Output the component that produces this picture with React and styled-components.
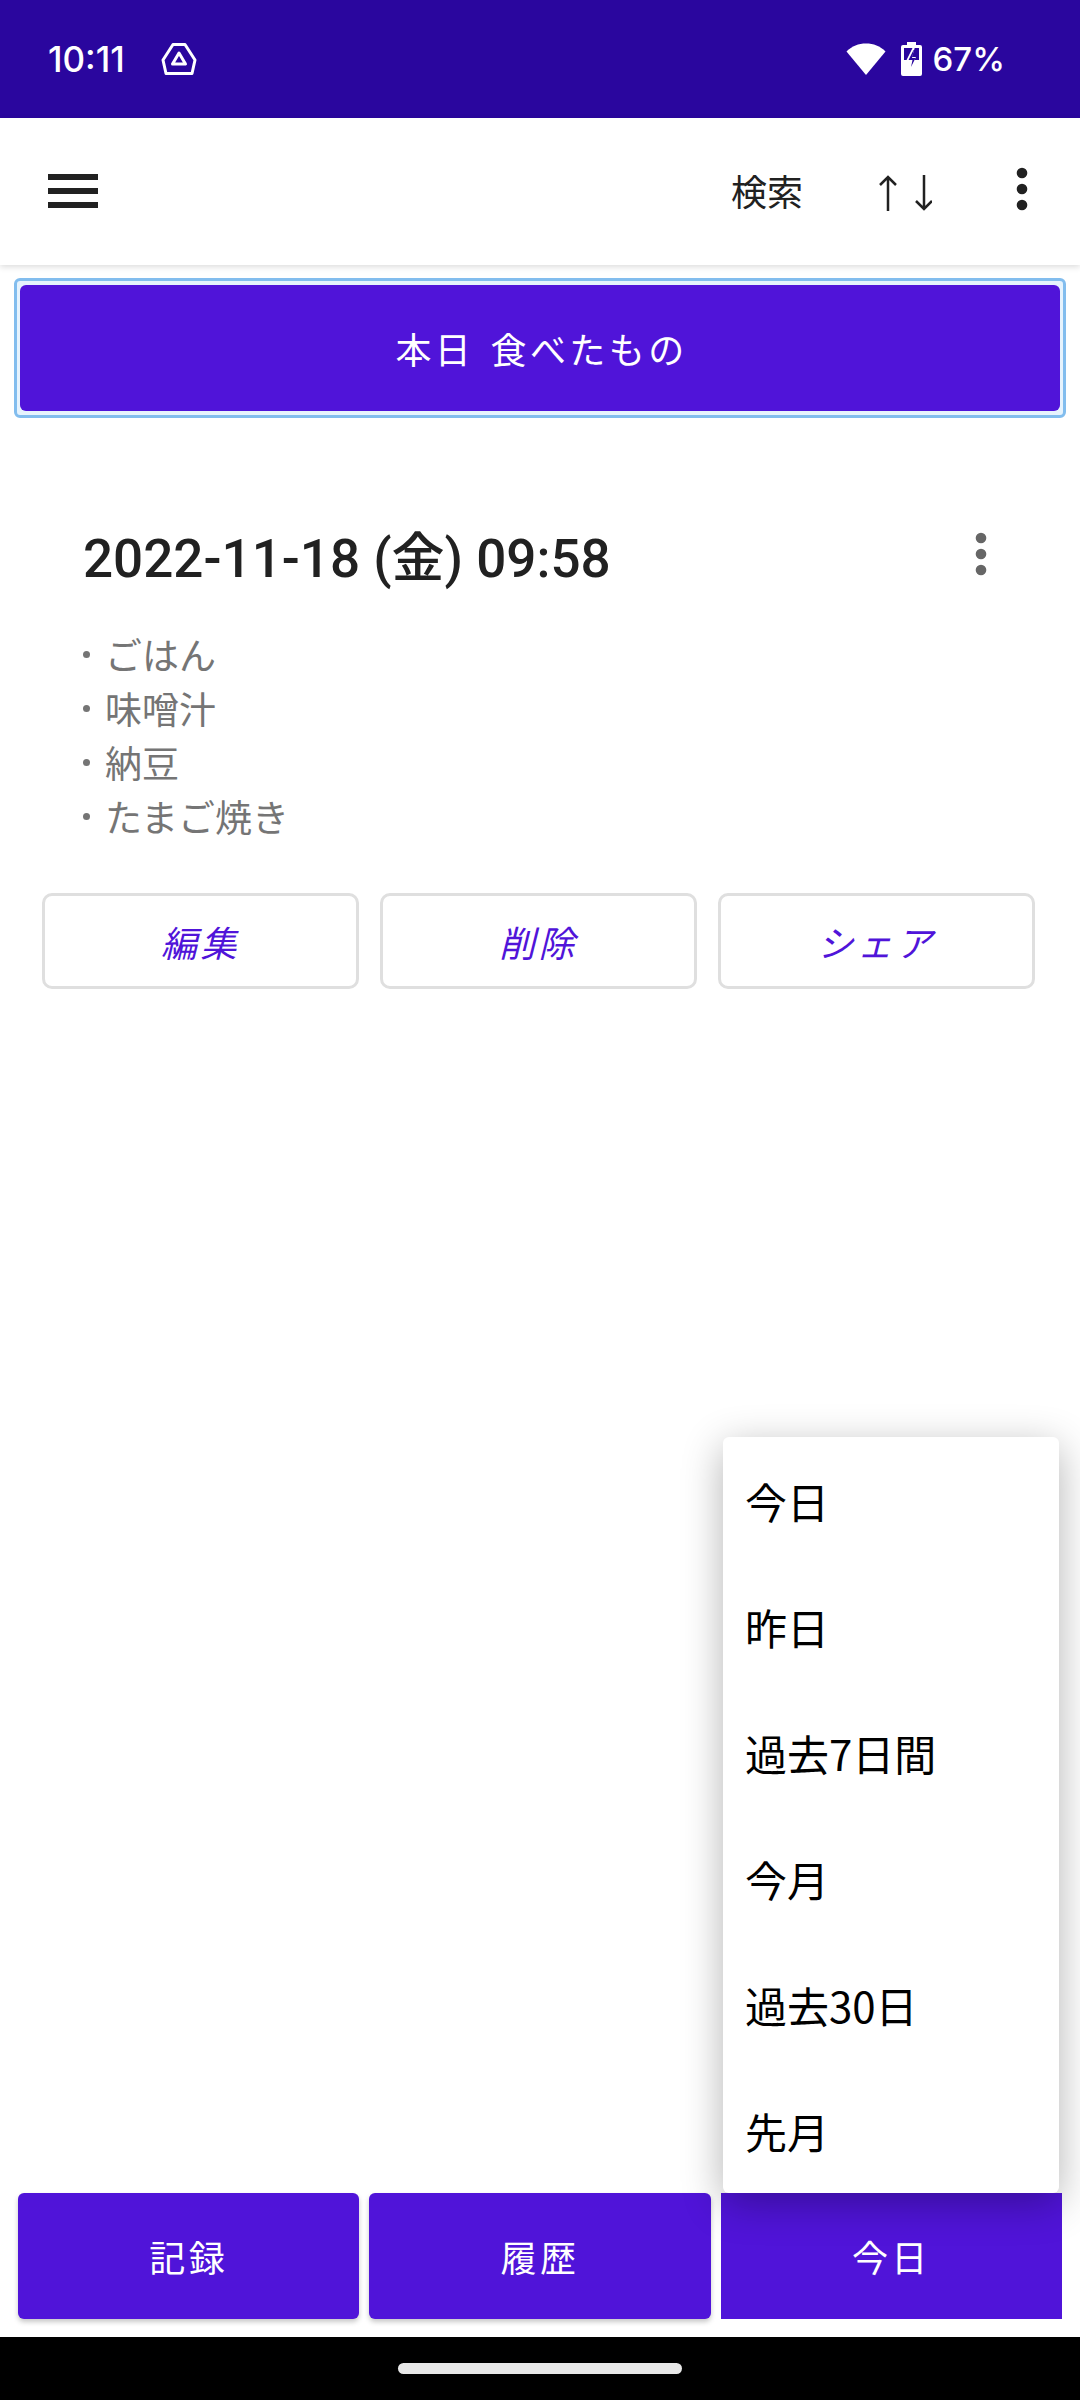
import React from "react";
import styled, { createGlobalStyle } from "styled-components";

const CJK = `Roboto, "Noto Sans CJK JP", sans-serif`;

const Global = createGlobalStyle`
  html, body { margin: 0; padding: 0; background: #fff; }
  * { box-sizing: border-box; }
  body { font-family: ${CJK}; }
`;

const Page = styled.div`
  position: relative;
  width: 1080px;
  height: 2400px;
  display: flex;
  flex-direction: column;
  overflow: hidden;
  background: #fff;
`;

const StatusBar = styled.div`
  height: 118px;
  flex: none;
  background: #2a069e;
  color: #fff;
  display: flex;
  align-items: center;
  padding: 0 75px 0 48px;
  font-family: Inter, sans-serif;
  font-size: 35px;
  font-weight: 500;
`;

const StatusTime = styled.span`
  line-height: 118px;
  margin-right: 36px;
`;

const StatusRight = styled.div`
  margin-left: auto;
  display: flex;
  align-items: center;
  font-size: 33px;
`;

const StatusIcon = styled.svg`
  display: block;
  flex: none;
  margin-right: ${(p) => p.$mr || 0}px;
`;

const Toolbar = styled.header`
  position: relative;
  z-index: 2;
  flex: none;
  height: 147px;
  background: #fff;
  box-shadow: 0 2px 6px rgba(0, 0, 0, 0.14);
  display: flex;
  align-items: center;
  padding: 0 0 0 48px;
  color: #212121;
`;

const SearchLabel = styled.span`
  margin-left: auto;
  font-size: 36px;
  line-height: 1;
  margin-top: 4px;
`;

const ToolbarIcon = styled.svg`
  display: block;
  flex: none;
  margin-left: ${(p) => p.$ml || 0}px;
  margin-top: ${(p) => p.$mt || 0}px;
  margin-right: ${(p) => p.$mr || 0}px;
`;

const Main = styled.main`
  flex: 1;
  padding: 13px 14px 0;
  display: flex;
  flex-direction: column;
`;

const FocusRing = styled.div`
  height: 140px;
  border: 3px solid #82bdee;
  border-radius: 6px;
  background: #e6f3fd;
  padding: 4px 3px;
  display: flex;
`;

const PrimaryButton = styled.button`
  flex: ${(p) => (p.$flex ? 1 : "none")};
  width: ${(p) => (p.$flex ? "auto" : "100%")};
  border: 0;
  border-radius: ${(p) => (p.$square ? 0 : 6)}px;
  background: #5014d9;
  color: #fff;
  font-family: ${CJK};
  font-size: 36px;
  letter-spacing: 3.4px;
  word-spacing: ${(p) => (p.$flex ? 0 : 4)}px;
  padding: ${(p) => (p.$flex ? "0" : "0 0 0 3px")};
  box-shadow: ${(p) => (p.$shadow ? "0 3px 5px rgba(0,0,0,.22)" : "none")};
`;

const Card = styled.section`
  padding: 0 29px 0 28px;
`;

const CardHead = styled.div`
  display: flex;
  align-items: flex-start;
  padding: 110px 0 0 41px;
  height: 209px;
`;

const Title = styled.h2`
  margin: 1px 0 0;
  font-size: 53px;
  line-height: 60px;
  font-weight: 500;
  color: #212121;
  white-space: nowrap;
`;

const CardKebab = styled.svg`
  display: block;
  margin-left: auto;
  margin-right: 48px;
  margin-top: 2px;
`;

const Foods = styled.ul`
  list-style: none;
  margin: 0;
  padding: 0 0 0 41px;
`;

const Food = styled.li`
  display: flex;
  align-items: center;
  height: 54px;
  font-size: 37px;
  color: #757575;
`;

const Bullet = styled.span`
  width: 7px;
  height: 7px;
  border-radius: 50%;
  background: #757575;
  margin-right: 15px;
  flex: none;
`;

const ActionRow = styled.div`
  display: flex;
  gap: 21px;
  margin-top: 50px;
`;

const ActionButton = styled.button`
  width: 317px;
  height: 96px;
  background: #fff;
  border: 3px solid #dfdfdf;
  border-radius: 10px;
  color: #5014d9;
  font-family: ${CJK};
  font-size: 36px;
  font-style: italic;
  letter-spacing: 3.4px;
  padding: 0;
`;

const BottomBar = styled.nav`
  flex: none;
  height: 126px;
  margin: 0 18px 18px;
  display: flex;
  gap: 10px;
`;

const NavBar = styled.div`
  flex: none;
  height: 63px;
  background: #000;
  display: flex;
  justify-content: center;
  padding-top: 26px;
`;

const HomeHandle = styled.div`
  width: 284px;
  height: 11px;
  border-radius: 6px;
  background: #e8e8e8;
`;

const Menu = styled.ul`
  position: absolute;
  z-index: 5;
  left: 723px;
  top: 1437px;
  width: 336px;
  margin: 0;
  padding: 0;
  list-style: none;
  background: #fff;
  border-radius: 6px;
  box-shadow: 0 10px 40px rgba(0, 0, 0, 0.3);
`;

const MenuItem = styled.li`
  height: 126px;
  display: flex;
  align-items: center;
  padding-left: 22px;
  font-family: "Noto Sans CJK JP", sans-serif;
  font-size: 42px;
  color: #000;
`;

const Kebab = ({ color, Comp, ...rest }) => (
  <Comp width="16" height="48" viewBox="0 0 16 48" {...rest}>
    <circle cx="8" cy="8" r="5.3" fill={color} />
    <circle cx="8" cy="24" r="5.3" fill={color} />
    <circle cx="8" cy="40" r="5.3" fill={color} />
  </Comp>
);

const foods = ["ごはん", "味噌汁", "納豆", "たまご焼き"];
const actions = ["編集", "削除", "シェア"];
const ranges = ["今日", "昨日", "過去7日間", "今月", "過去30日", "先月"];

export default function App() {
  return (
    <Page>
      <Global />
      <StatusBar>
        <StatusTime>10:11</StatusTime>
        <StatusIcon width="36" height="32" viewBox="0 0 36 32" fill="none" stroke="#fff" strokeLinejoin="round">
          <path d="M12 1.500h12l10 15.500-3 13.500H5L2 17z" strokeWidth="3" />
          <path d="M18 10l6.500 11h-13z" strokeWidth="3" />
        </StatusIcon>
        <StatusRight>
          <StatusIcon $mr={15} width="40" height="34" viewBox="0 0 40 34">
            <path d="M20 33L0.5 9.5C6 4 12.5 1.5 20 1.5S34 4 39.500 9.500z" fill="#fff" />
          </StatusIcon>
          <StatusIcon $mr={11} width="21" height="34" viewBox="0 0 21 34">
            <path d="M6 0h9v3h4a2 2 0 0 1 2 2v27a2 2 0 0 1-2 2H2a2 2 0 0 1-2-2V5a2 2 0 0 1 2-2h4z" fill="#fff" />
            <path d="M3 6h15v12H3z" fill="#2a069e" />
            <path d="M12 5L5 19h4l-2 11 8-15h-4l3-10z" fill="#fff" />
            <path d="M12.500 8L7.500 18h4l-1.500 7 4.500-9h-3.500l2-8z" fill="#2a069e" />
          </StatusIcon>
          <span>67%</span>
        </StatusRight>
      </StatusBar>

      <Toolbar>
        <ToolbarIcon width="50" height="36" viewBox="0 0 50 36" $mt={-2}>
          <path d="M0 1h50v6H0zM0 15h50v6H0zM0 29h50v6H0z" fill="#212121" />
        </ToolbarIcon>
        <SearchLabel>検索</SearchLabel>
        <ToolbarIcon
          $ml={75}
          $mt={2}
          width="54"
          height="36"
          viewBox="0 0 54 36"
          fill="none"
          stroke="#212121"
          strokeWidth="2.500"
        >
          <path d="M10 36V2M2 10l8-8 8 8M46 0v34M38 26l8 8 8-8" />
        </ToolbarIcon>
        <Kebab Comp={ToolbarIcon} color="#212121" $ml={82} $mt={-6} $mr={50} />
      </Toolbar>

      <Main>
        <FocusRing>
          <PrimaryButton>本日 食べたもの</PrimaryButton>
        </FocusRing>
        <Card>
          <CardHead>
            <Title>2022-11-18 (金) 09:58</Title>
            <Kebab Comp={CardKebab} color="#666" />
          </CardHead>
          <Foods>
            {foods.map((f) => (
              <Food key={f}>
                <Bullet />
                {f}
              </Food>
            ))}
          </Foods>
          <ActionRow>
            {actions.map((a) => (
              <ActionButton key={a}>{a}</ActionButton>
            ))}
          </ActionRow>
        </Card>
      </Main>

      <BottomBar>
        <PrimaryButton $flex $shadow>記録</PrimaryButton>
        <PrimaryButton $flex $shadow>履歴</PrimaryButton>
        <PrimaryButton $flex $square>今日</PrimaryButton>
      </BottomBar>
      <NavBar>
        <HomeHandle />
      </NavBar>

      <Menu>
        {ranges.map((r) => (
          <MenuItem key={r}>{r}</MenuItem>
        ))}
      </Menu>
    </Page>
  );
}
